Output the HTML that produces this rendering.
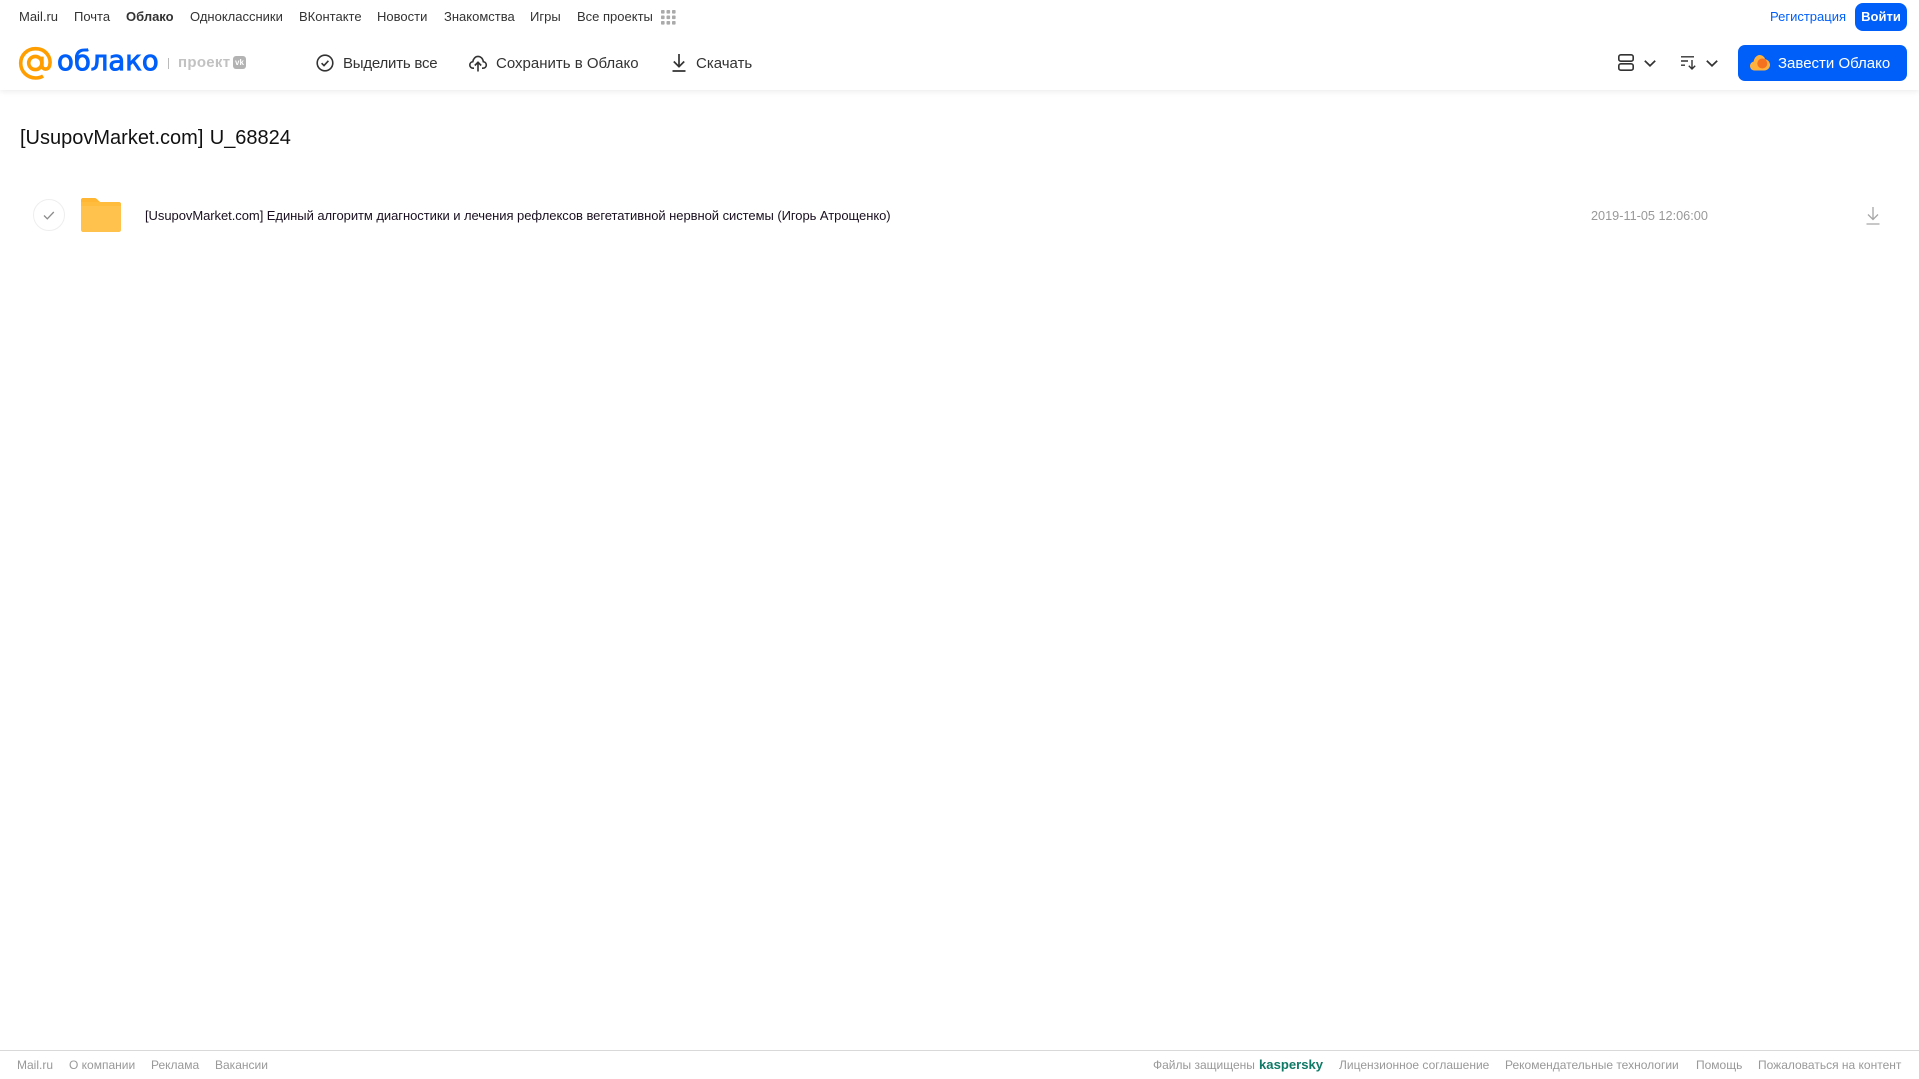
<!DOCTYPE html>
<html lang="ru"><head><meta charset="utf-8"><title>Облако</title>
<style>
html,body{margin:0;padding:0;background:#fff;width:1919px;height:1079px;overflow:hidden}
body{font-family:"Liberation Sans",Arial,sans-serif;position:relative}
.t{position:absolute;white-space:nowrap;line-height:20px;height:20px}
.n{top:7px;font-size:13px;color:#333}
.b{top:54px;font-size:15px;color:#333}
.f{top:1055px;font-size:12px;color:#999}
svg{position:absolute;overflow:visible}
</style></head><body>
<div style="position:absolute;left:0;top:0;width:1919px;height:90px;background:#fff;box-shadow:0 1px 6px rgba(0,0,0,.09)"></div>

<span class="t n" style="left:19px">Mail.ru</span>
<span class="t n" style="left:74px">Почта</span>
<span class="t n" style="left:126px;font-weight:700">Облако</span>
<span class="t n" style="left:190px">Одноклассники</span>
<span class="t n" style="left:299px">ВКонтакте</span>
<span class="t n" style="left:377px">Новости</span>
<span class="t n" style="left:444px">Знакомства</span>
<span class="t n" style="left:530px">Игры</span>
<span class="t n" style="left:577px">Все проекты</span>
<svg style="left:661px;top:10px" width="15" height="15" fill="#aaa"><rect x="0" y="0" width="3.6" height="3.6" rx=".8"/><rect x="5.5" y="0" width="3.6" height="3.6" rx=".8"/><rect x="11" y="0" width="3.6" height="3.6" rx=".8"/><rect x="0" y="5.5" width="3.6" height="3.6" rx=".8"/><rect x="5.5" y="5.5" width="3.6" height="3.6" rx=".8"/><rect x="11" y="5.5" width="3.6" height="3.6" rx=".8"/><rect x="0" y="11" width="3.6" height="3.6" rx=".8"/><rect x="5.5" y="11" width="3.6" height="3.6" rx=".8"/><rect x="11" y="11" width="3.6" height="3.6" rx=".8"/></svg>

<span class="t n" style="left:1770px;color:#005ff9">Регистрация</span>
<div style="position:absolute;left:1855px;top:3px;width:52px;height:28px;border-radius:8px;background:#005ff9;color:#fff;font-size:13px;font-weight:700;line-height:27px;text-align:center">Войти</div>

<!-- logo -->
<svg style="left:19px;top:47px" width="33" height="33" viewBox="0 0 33 33" fill="none" stroke="#ff9e00" stroke-width="3.6"><circle cx="16.3" cy="16" r="6.6"/><path d="M22.9 9.6v8.6c0 5 6.6 5.2 7.800.4 1.900-8-3.600-16.900-14.300-16.900C8 1.700 1.700 8.200 1.700 16.200c0 8.300 6.700 14.800 14.900 14.800 2.900 0 5.400-.7 7.500-2"/></svg>
<span class="t" style="left:57px;top:41px;height:40px;line-height:40px;font-family:'DejaVu Sans',sans-serif;font-size:27.500px;color:#005ff9;-webkit-text-stroke:.9px #005ff9">облако</span>
<div style="position:absolute;left:168px;top:58px;width:1px;height:11px;background:#bbb"></div>
<span class="t" style="left:178px;top:53px;font-size:15px;font-weight:700;color:#c2c2c2;letter-spacing:.3px">проект</span>
<div style="position:absolute;left:233px;top:56px;width:13px;height:13px;border-radius:3px;background:#b3b3b3;color:#fff;font-size:8px;font-weight:700;line-height:13px;text-align:center">vk</div>

<!-- toolbar -->
<svg style="left:316px;top:54px" width="18" height="18" viewBox="0 0 18 18" fill="none" stroke="#333" stroke-width="1.600"><circle cx="9" cy="9" r="7.800"/><path d="M5.600 9.200l2.400 2.400 4.400-4.800"/></svg>
<span class="t b" style="left:343px;letter-spacing:-.22px">Выделить все</span>
<svg style="left:469px;top:54px" width="18" height="18" viewBox="0 0 18 18" fill="none" stroke="#333" stroke-width="1.600"><path d="M5 14.200H4.200C2.200 14.200.8 12.800.8 11c0-1.700 1.300-3.100 3-3.300C4.300 4.600 6.400 2.400 9 2.400s4.900 2.100 5.300 5.300c1.700.2 3 1.600 3 3.300 0 1.800-1.400 3.200-3.400 3.200H13"/><path d="M9 17.500V8.500M5.800 11.500L9 8.300l3.200 3.200"/></svg>
<span class="t b" style="left:496px">Сохранить в Облако</span>
<svg style="left:671px;top:54px" width="16" height="18" viewBox="0 0 16 18" fill="none" stroke="#333" stroke-width="1.700"><path d="M8 0v12.500M2.800 7.500L8 12.700l5.200-5.200M1.500 17h13"/></svg>
<span class="t b" style="left:696px">Скачать</span>

<!-- right tools -->
<svg style="left:1618px;top:54px" width="16" height="17" viewBox="0 0 16 17" fill="none" stroke="#333" stroke-width="1.600"><rect x=".8" y=".8" width="14.400" height="6.400" rx="2"/><rect x=".8" y="9.800" width="14.400" height="6.400" rx="2"/></svg>
<svg style="left:1644px;top:60px" width="12" height="7" viewBox="0 0 12 7" fill="none" stroke="#333" stroke-width="1.700"><path d="M.8.800L6 5.800 11.200.8"/></svg>
<svg style="left:1681px;top:56px" width="16" height="14" viewBox="0 0 16 14" fill="none" stroke="#333" stroke-width="1.400"><path d="M0 .8h13M0 5h7M0 9.200h4M11 4v9M7.800 9.800L11 13l3.200-3.200"/></svg>
<svg style="left:1706px;top:60px" width="12" height="7" viewBox="0 0 12 7" fill="none" stroke="#333" stroke-width="1.700"><path d="M.8.800L6 5.800 11.200.8"/></svg>
<div style="position:absolute;left:1738px;top:45px;width:169px;height:36px;border-radius:7px;background:#005ff9"></div>
<svg style="left:1750px;top:54px" width="20" height="17" viewBox="0 0 20 17"><path d="M4.500 16.500C2 16.500 0 14.500 0 12c0-2.200 1.500-4 3.600-4.400C4 4.500 6.500 1 9.700 1c2.600 0 4.800 1.800 5.400 4.200 2.700.4 4.900 2.800 4.900 5.700 0 3.200-2.600 5.600-5.700 5.600z" fill="#ffb13d"/><circle cx="12.300" cy="9.500" r="5" fill="#f5701f"/></svg>
<span class="t b" style="left:1778px;color:#fff">Завести Облако</span>

<!-- content -->
<span class="t" style="left:20px;top:125px;height:26px;line-height:26px;font-size:20px;color:#111;word-spacing:.8px">[UsupovMarket.com] U_68824</span>
<div style="position:absolute;left:33px;top:199px;width:30px;height:30px;border:1px solid #eee;border-radius:50%"></div>
<svg style="left:43px;top:211px" width="12" height="9" viewBox="0 0 12 9" fill="none" stroke="#8c8c8c" stroke-width="1.300"><path d="M1 4.500L4.300 7.800 10.800 1"/></svg>
<svg style="left:81px;top:198px" width="40" height="34" viewBox="0 0 40 34"><path d="M2 0h11c1.500 0 2.500.6 3.500 1.700L19 4h19c1.100 0 2 .9 2 2v26c0 1.100-.9 2-2 2H2c-1.100 0-2-.9-2-2V2C0 .9.900 0 2 0z" fill="#ffc34d"/><path d="M0 8h40V6c0-1.100-.9-2-2-2H0z" fill="#ffb733" opacity=".6"/><path d="M2 0h11c1.500 0 2.500.6 3.500 1.700L19 4H0V2C0 .9.900 0 2 0z" fill="#ffb733"/></svg>
<span class="t" style="left:145px;top:206px;font-size:13px;color:#1a1020;letter-spacing:-.053px">[UsupovMarket.com] Единый алгоритм диагностики и лечения рефлексов вегетативной нервной системы (Игорь Атрощенко)</span>
<span class="t" style="left:1591px;top:206px;font-size:12.700px;color:#999">2019-11-05 12:06:00</span>
<svg style="left:1866px;top:207px" width="14" height="18" viewBox="0 0 14 18" fill="none" stroke="#a6a6a6" stroke-width="1.300"><path d="M7 0v12.500M2 7.500l5 5 5-5M.5 17h13"/></svg>

<!-- footer -->
<div style="position:absolute;left:0;top:1050px;width:1919px;height:1px;background:#d9d9d9"></div>
<span class="t f" style="left:17px">Mail.ru</span>
<span class="t f" style="left:69px">О компании</span>
<span class="t f" style="left:151px">Реклама</span>
<span class="t f" style="left:215px">Вакансии</span>
<span class="t f" style="left:1153px">Файлы защищены</span>
<span class="t f" style="left:1259px;font-weight:700;color:#0f7a66;font-size:13.100px">kaspersky</span>
<span class="t f" style="left:1339px">Лицензионное соглашение</span>
<span class="t f" style="left:1505px">Рекомендательные технологии</span>
<span class="t f" style="left:1696px">Помощь</span>
<span class="t f" style="left:1758px">Пожаловаться на контент</span>
</body></html>
